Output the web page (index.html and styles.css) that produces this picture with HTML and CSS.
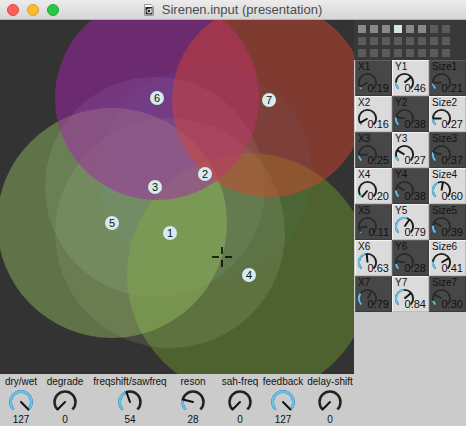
FILE: index.html
```html
<!DOCTYPE html>
<html>
<head>
<meta charset="utf-8">
<link rel="stylesheet" href="styles.css">
</head>
<body>
<div class="window">
  <div class="titlebar">
    <div class="lights"><span class="tl red"></span><span class="tl yellow"></span><span class="tl green"></span></div>
    <div class="title">
      <svg class="docicon" viewBox="0 0 10 12"><path d="M0.5 0.5 H7 L9.5 3 V11.5 H0.5 Z" fill="#fff" stroke="#999" stroke-width="1"/><rect x="1.5" y="3" width="7" height="7.5" fill="#222"/><circle cx="5" cy="7" r="2" fill="none" stroke="#fff" stroke-width="1"/><line x1="7" y1="4" x2="7" y2="9" stroke="#fff" stroke-width="1"/></svg>
      <span class="title-text">Sirenen.input (presentation)</span>
    </div>
    <div></div>
  </div>
  <div class="main">
    <div class="canvas">
      <svg width="354" height="354" viewBox="0 0 354 354">
        <circle cx="205" cy="154" r="107" fill="rgba(40,80,110,0.3)"/>
        <circle cx="155" cy="167" r="110" fill="rgba(150,200,215,0.18)"/>
        <circle cx="249" cy="255" r="122" fill="rgba(92,124,44,0.65)"/>
        <circle cx="170" cy="213" r="115" fill="rgba(220,225,200,0.12)"/>
        <circle cx="112" cy="203" r="115" fill="rgba(150,190,95,0.45)"/>
        <circle cx="157" cy="78" r="102" fill="rgba(165,35,172,0.5)"/>
        <circle cx="269" cy="80" r="97" fill="rgba(215,67,44,0.47)"/>
        <g class="tags">
          <circle cx="170" cy="213" r="7"/><text x="170" y="217">1</text>
          <circle cx="205" cy="154" r="7"/><text x="205" y="158">2</text>
          <circle cx="155" cy="167" r="7"/><text x="155" y="171">3</text>
          <circle cx="249" cy="255" r="7"/><text x="249" y="259">4</text>
          <circle cx="112" cy="203" r="7"/><text x="112" y="207">5</text>
          <circle cx="157" cy="78" r="7"/><text x="157" y="82">6</text>
          <circle cx="269" cy="80" r="7"/><text x="269" y="84">7</text>
        </g>
        <g class="cross">
          <line x1="212" y1="237" x2="219" y2="237"/><line x1="225" y1="237" x2="232" y2="237"/>
          <line x1="222" y1="227" x2="222" y2="234"/><line x1="222" y1="240" x2="222" y2="247"/>
        </g>
      </svg>
    </div>
    <div class="side">
      <div class="matrix">
        <span class="sq hi"></span><span class="sq hi"></span><span class="sq hi"></span><span class="sq sel"></span><span class="sq hi"></span><span class="sq hi"></span><span class="sq"></span><span class="sq"></span>
        <span class="sq"></span><span class="sq"></span><span class="sq"></span><span class="sq"></span><span class="sq"></span><span class="sq"></span><span class="sq"></span><span class="sq"></span>
        <span class="sq"></span><span class="sq"></span><span class="sq"></span><span class="sq"></span><span class="sq"></span><span class="sq"></span><span class="sq"></span><span class="sq"></span>
      </div>
      <div class="knobs">
        <div class="cell dk"><span class="lab">X1</span><svg class="dial" viewBox="0 0 24 24"><circle class="trk" cx="12" cy="12" r="9" pathLength="360" transform="rotate(135 12 12)"/><circle class="act" cx="12" cy="12" r="9" pathLength="360" transform="rotate(135 12 12)" stroke-dasharray="14 360"/><line class="ndl" x1="12" y1="12" x2="12" y2="3" transform="rotate(-121 12 12)"/></svg><span class="val">0.19</span></div>
        <div class="cell lt"><span class="lab">Y1</span><svg class="dial" viewBox="0 0 24 24"><circle class="trk" cx="12" cy="12" r="9" pathLength="360" transform="rotate(135 12 12)"/><circle class="act" cx="12" cy="12" r="9" pathLength="360" transform="rotate(135 12 12)" stroke-dasharray="45 360"/><line class="ndl" x1="12" y1="12" x2="12" y2="3" transform="rotate(50 12 12)"/></svg><span class="val">0.46</span></div>
        <div class="cell dk"><span class="lab">Size1</span><svg class="dial" viewBox="0 0 24 24"><circle class="trk" cx="12" cy="12" r="9" pathLength="360" transform="rotate(135 12 12)"/><circle class="act" cx="12" cy="12" r="9" pathLength="360" transform="rotate(135 12 12)" stroke-dasharray="40 360"/><line class="ndl" x1="12" y1="12" x2="12" y2="3" transform="rotate(-95 12 12)"/></svg><span class="val">0.21</span></div>

        <div class="cell lt"><span class="lab">X2</span><svg class="dial" viewBox="0 0 24 24"><circle class="trk" cx="12" cy="12" r="9" pathLength="360" transform="rotate(135 12 12)"/><circle class="act" cx="12" cy="12" r="9" pathLength="360" transform="rotate(135 12 12)" stroke-dasharray="15 360"/><line class="ndl" x1="12" y1="12" x2="12" y2="3" transform="rotate(-120 12 12)"/></svg><span class="val">0.16</span></div>
        <div class="cell dk"><span class="lab">Y2</span><svg class="dial" viewBox="0 0 24 24"><circle class="trk" cx="12" cy="12" r="9" pathLength="360" transform="rotate(135 12 12)"/><circle class="act" cx="12" cy="12" r="9" pathLength="360" transform="rotate(135 12 12)" stroke-dasharray="55 360"/><line class="ndl" x1="12" y1="12" x2="12" y2="3" transform="rotate(-80 12 12)"/></svg><span class="val">0.38</span></div>
        <div class="cell lt"><span class="lab">Size2</span><svg class="dial" viewBox="0 0 24 24"><circle class="trk" cx="12" cy="12" r="9" pathLength="360" transform="rotate(135 12 12)"/><circle class="act" cx="12" cy="12" r="9" pathLength="360" transform="rotate(135 12 12)" stroke-dasharray="45 360"/><line class="ndl" x1="12" y1="12" x2="12" y2="3" transform="rotate(-90 12 12)"/></svg><span class="val">0.27</span></div>

        <div class="cell dk"><span class="lab">X3</span><svg class="dial" viewBox="0 0 24 24"><circle class="trk" cx="12" cy="12" r="9" pathLength="360" transform="rotate(135 12 12)"/><circle class="act" cx="12" cy="12" r="9" pathLength="360" transform="rotate(135 12 12)" stroke-dasharray="40 360"/><line class="ndl" x1="12" y1="12" x2="12" y2="3" transform="rotate(-95 12 12)"/></svg><span class="val">0.25</span></div>
        <div class="cell lt"><span class="lab">Y3</span><svg class="dial" viewBox="0 0 24 24"><circle class="trk" cx="12" cy="12" r="9" pathLength="360" transform="rotate(135 12 12)"/><circle class="act" cx="12" cy="12" r="9" pathLength="360" transform="rotate(135 12 12)" stroke-dasharray="30 360"/><line class="ndl" x1="12" y1="12" x2="12" y2="3" transform="rotate(-60 12 12)"/></svg><span class="val">0.27</span></div>
        <div class="cell dk"><span class="lab">Size3</span><svg class="dial" viewBox="0 0 24 24"><circle class="trk" cx="12" cy="12" r="9" pathLength="360" transform="rotate(135 12 12)"/><circle class="act" cx="12" cy="12" r="9" pathLength="360" transform="rotate(135 12 12)" stroke-dasharray="60 360"/><line class="ndl" x1="12" y1="12" x2="12" y2="3" transform="rotate(-75 12 12)"/></svg><span class="val">0.37</span></div>

        <div class="cell lt"><span class="lab">X4</span><svg class="dial" viewBox="0 0 24 24"><circle class="trk" cx="12" cy="12" r="9" pathLength="360" transform="rotate(135 12 12)"/><circle class="act" cx="12" cy="12" r="9" pathLength="360" transform="rotate(135 12 12)" stroke-dasharray="15 360"/><line class="ndl" x1="12" y1="12" x2="12" y2="3" transform="rotate(-140 12 12)"/></svg><span class="val">0.20</span></div>
        <div class="cell dk"><span class="lab">Y4</span><svg class="dial" viewBox="0 0 24 24"><circle class="trk" cx="12" cy="12" r="9" pathLength="360" transform="rotate(135 12 12)"/><circle class="act" cx="12" cy="12" r="9" pathLength="360" transform="rotate(135 12 12)" stroke-dasharray="45 360"/><line class="ndl" x1="12" y1="12" x2="12" y2="3" transform="rotate(-60 12 12)"/></svg><span class="val">0.38</span></div>
        <div class="cell lt"><span class="lab">Size4</span><svg class="dial" viewBox="0 0 24 24"><circle class="trk" cx="12" cy="12" r="9" pathLength="360" transform="rotate(135 12 12)"/><circle class="act" cx="12" cy="12" r="9" pathLength="360" transform="rotate(135 12 12)" stroke-dasharray="110 360"/><line class="ndl" x1="12" y1="12" x2="12" y2="3" transform="rotate(10 12 12)"/></svg><span class="val">0.60</span></div>

        <div class="cell dk"><span class="lab">X5</span><svg class="dial" viewBox="0 0 24 24"><circle class="trk" cx="12" cy="12" r="9" pathLength="360" transform="rotate(135 12 12)"/><circle class="act" cx="12" cy="12" r="9" pathLength="360" transform="rotate(135 12 12)" stroke-dasharray="8 360"/><line class="ndl" x1="12" y1="12" x2="12" y2="3" transform="rotate(-100 12 12)"/></svg><span class="val">0.11</span></div>
        <div class="cell lt"><span class="lab">Y5</span><svg class="dial" viewBox="0 0 24 24"><circle class="trk" cx="12" cy="12" r="9" pathLength="360" transform="rotate(135 12 12)"/><circle class="act" cx="12" cy="12" r="9" pathLength="360" transform="rotate(135 12 12)" stroke-dasharray="150 360"/><line class="ndl" x1="12" y1="12" x2="12" y2="3" transform="rotate(35 12 12)"/></svg><span class="val">0.79</span></div>
        <div class="cell dk"><span class="lab">Size5</span><svg class="dial" viewBox="0 0 24 24"><circle class="trk" cx="12" cy="12" r="9" pathLength="360" transform="rotate(135 12 12)"/><circle class="act" cx="12" cy="12" r="9" pathLength="360" transform="rotate(135 12 12)" stroke-dasharray="50 360"/><line class="ndl" x1="12" y1="12" x2="12" y2="3" transform="rotate(-60 12 12)"/></svg><span class="val">0.39</span></div>

        <div class="cell lt"><span class="lab">X6</span><svg class="dial" viewBox="0 0 24 24"><circle class="trk" cx="12" cy="12" r="9" pathLength="360" transform="rotate(135 12 12)"/><circle class="act" cx="12" cy="12" r="9" pathLength="360" transform="rotate(135 12 12)" stroke-dasharray="120 360"/><line class="ndl" x1="12" y1="12" x2="12" y2="3" transform="rotate(-5 12 12)"/></svg><span class="val">0.63</span></div>
        <div class="cell dk"><span class="lab">Y6</span><svg class="dial" viewBox="0 0 24 24"><circle class="trk" cx="12" cy="12" r="9" pathLength="360" transform="rotate(135 12 12)"/><circle class="act" cx="12" cy="12" r="9" pathLength="360" transform="rotate(135 12 12)" stroke-dasharray="35 360"/><line class="ndl" x1="12" y1="12" x2="12" y2="3" transform="rotate(-80 12 12)"/></svg><span class="val">0.28</span></div>
        <div class="cell lt"><span class="lab">Size6</span><svg class="dial" viewBox="0 0 24 24"><circle class="trk" cx="12" cy="12" r="9" pathLength="360" transform="rotate(135 12 12)"/><circle class="act" cx="12" cy="12" r="9" pathLength="360" transform="rotate(135 12 12)" stroke-dasharray="50 360"/><line class="ndl" x1="12" y1="12" x2="12" y2="3" transform="rotate(60 12 12)"/></svg><span class="val">0.41</span></div>

        <div class="cell dk"><span class="lab">X7</span><svg class="dial" viewBox="0 0 24 24"><circle class="trk" cx="12" cy="12" r="9" pathLength="360" transform="rotate(135 12 12)"/><circle class="act" cx="12" cy="12" r="9" pathLength="360" transform="rotate(135 12 12)" stroke-dasharray="80 360"/><line class="ndl" x1="12" y1="12" x2="12" y2="3" transform="rotate(30 12 12)"/></svg><span class="val">0.79</span></div>
        <div class="cell lt"><span class="lab">Y7</span><svg class="dial" viewBox="0 0 24 24"><circle class="trk" cx="12" cy="12" r="9" pathLength="360" transform="rotate(135 12 12)"/><circle class="act" cx="12" cy="12" r="9" pathLength="360" transform="rotate(135 12 12)" stroke-dasharray="130 360"/><line class="ndl" x1="12" y1="12" x2="12" y2="3" transform="rotate(50 12 12)"/></svg><span class="val">0.84</span></div>
        <div class="cell dk"><span class="lab">Size7</span><svg class="dial" viewBox="0 0 24 24"><circle class="trk" cx="12" cy="12" r="9" pathLength="360" transform="rotate(135 12 12)"/><circle class="act" cx="12" cy="12" r="9" pathLength="360" transform="rotate(135 12 12)" stroke-dasharray="30 360"/><line class="ndl" x1="12" y1="12" x2="12" y2="3" transform="rotate(-60 12 12)"/></svg><span class="val">0.30</span></div>
      </div>
    </div>
  </div>
  <div class="bottom">
    <div class="ctl"><span class="clab">dry/wet</span><svg class="bdial" viewBox="0 0 26 26"><circle class="trk" cx="13" cy="13" r="10.5" pathLength="360" transform="rotate(135 13 13)"/><circle class="act" cx="13" cy="13" r="10.5" pathLength="360" transform="rotate(135 13 13)" stroke-dasharray="270 360"/><line class="ndl" x1="13" y1="13" x2="13" y2="2.5" transform="rotate(135 13 13)"/></svg><span class="cval">127</span></div>
    <div class="ctl"><span class="clab">degrade</span><svg class="bdial" viewBox="0 0 26 26"><circle class="trk" cx="13" cy="13" r="10.5" pathLength="360" transform="rotate(135 13 13)"/><line class="ndl" x1="13" y1="13" x2="13" y2="2.5" transform="rotate(-135 13 13)"/></svg><span class="cval">0</span></div>
    <div class="ctl"><span class="clab">freqshift/sawfreq</span><svg class="bdial" viewBox="0 0 26 26"><circle class="trk" cx="13" cy="13" r="10.5" pathLength="360" transform="rotate(135 13 13)"/><circle class="act" cx="13" cy="13" r="10.5" pathLength="360" transform="rotate(135 13 13)" stroke-dasharray="115 360"/><line class="ndl" x1="13" y1="13" x2="13" y2="2.5" transform="rotate(-20 13 13)"/></svg><span class="cval">54</span></div>
    <div class="ctl"><span class="clab">reson</span><svg class="bdial" viewBox="0 0 26 26"><circle class="trk" cx="13" cy="13" r="10.5" pathLength="360" transform="rotate(135 13 13)"/><circle class="act" cx="13" cy="13" r="10.5" pathLength="360" transform="rotate(135 13 13)" stroke-dasharray="60 360"/><line class="ndl" x1="13" y1="13" x2="13" y2="2.5" transform="rotate(-76 13 13)"/></svg><span class="cval">28</span></div>
    <div class="ctl"><span class="clab">sah-freq</span><svg class="bdial" viewBox="0 0 26 26"><circle class="trk" cx="13" cy="13" r="10.5" pathLength="360" transform="rotate(135 13 13)"/><line class="ndl" x1="13" y1="13" x2="13" y2="2.5" transform="rotate(-135 13 13)"/></svg><span class="cval">0</span></div>
    <div class="ctl"><span class="clab">feedback</span><svg class="bdial" viewBox="0 0 26 26"><circle class="trk" cx="13" cy="13" r="10.5" pathLength="360" transform="rotate(135 13 13)"/><circle class="act" cx="13" cy="13" r="10.5" pathLength="360" transform="rotate(135 13 13)" stroke-dasharray="270 360"/><line class="ndl" x1="13" y1="13" x2="13" y2="2.5" transform="rotate(135 13 13)"/></svg><span class="cval">127</span></div>
    <div class="ctl"><span class="clab">delay-shift</span><svg class="bdial" viewBox="0 0 26 26"><circle class="trk" cx="13" cy="13" r="10.5" pathLength="360" transform="rotate(135 13 13)"/><line class="ndl" x1="13" y1="13" x2="13" y2="2.5" transform="rotate(-135 13 13)"/></svg><span class="cval">0</span></div>
  </div>
</div>
</body>
</html>
```
FILE: styles.css
```css
* { box-sizing: border-box; }
html, body { margin: 0; padding: 0; }
body {
  width: 466px;
  height: 426px;
  overflow: hidden;
  background: #cbcbcb;
  font-family: "Liberation Sans", Arial, sans-serif;
  color: #111;
}
.window { width: 466px; height: 426px; display: flex; flex-direction: column; }

.titlebar {
  height: 20px;
  flex: none;
  display: grid;
  grid-template-columns: 1fr auto 1fr;
  align-items: center;
  background: linear-gradient(#ececec, #d6d6d6);
  border-bottom: 1px solid #b4b4b4;
}
.lights { display: flex; gap: 8px; padding-left: 7px; }
.tl { width: 12px; height: 12px; border-radius: 50%; display: block; }
.red { background: #fc5f57; border: 0.5px solid #de4a41; }
.yellow { background: #fdbc2e; border: 0.5px solid #dea123; }
.green { background: #28c840; border: 0.5px solid #1eab33; }
.title { display: flex; align-items: center; gap: 8px; }
.docicon { width: 10px; height: 12px; display: block; }
.title-text { font-size: 13px; color: #4b4b4b; }

.main { display: flex; height: 354px; flex: none; }
.canvas { width: 354px; height: 354px; background: #333333; overflow: hidden; }
.canvas svg { display: block; }
.tags circle { fill: #d5ecee; }
.tags text { font-family: "Liberation Sans", Arial, sans-serif; font-size: 11px; text-anchor: middle; fill: #111; }
.cross line { stroke: #000; stroke-width: 1.5; }

.side { width: 112px; display: flex; flex-direction: column; }
.matrix {
  height: 40px;
  background: #393939;
  padding: 5px 0 0 4px;
  display: grid;
  grid-template-columns: repeat(8, 8px);
  grid-auto-rows: 8px;
  column-gap: 4px;
  row-gap: 4px;
}
.sq { display: block; background: #5b5b5b; }
.sq.hi { background: #8a8a8a; }
.sq.sel { background: #cfe7e8; }

.knobs {
  margin-left: 1px;
  display: grid;
  grid-template-columns: repeat(3, 37px);
  grid-auto-rows: 36px;
}
.cell { position: relative; border: 1px solid; overflow: hidden; }
.cell.dk { background: #474747; border-color: #5e5e5e #3a3a3a #3a3a3a #5e5e5e; }
.cell.lt { background: #dbdbdb; border-color: #f4f4f4 #bcbcbc #bcbcbc #f4f4f4; }
.lab { position: absolute; left: 2px; top: 0px; font-size: 10px; line-height: 11px; }
.val { position: absolute; right: 2px; bottom: 1px; font-size: 11px; line-height: 12px; }
.dial { position: absolute; left: 0px; top: 10px; width: 23px; height: 23px; }
.dial .trk { fill: none; stroke: #1f1f1f; stroke-width: 2; stroke-dasharray: 270 360; }
.dk .dial .trk { stroke: #2a2a2a; }
.dial .act { fill: none; stroke: #5ec5f2; stroke-width: 2; }
.dial .ndl { stroke: #111; stroke-width: 2; }
.dk .dial .ndl { stroke: #2a2a2a; }

.bottom {
  height: 52px;
  flex: none;
  display: grid;
  grid-template-columns: 42px 46px 84px 42px 52px 34px 60px;
}
.ctl { display: flex; flex-direction: column; align-items: center; padding-top: 2px; }
.clab { font-size: 10px; line-height: 12px; white-space: nowrap; }
.bdial { width: 26px; height: 26px; display: block; margin-top: 1px; }
.bdial .trk { fill: none; stroke: #222; stroke-width: 2.5; stroke-dasharray: 270 360; }
.bdial .act { fill: none; stroke: #5ec5f2; stroke-width: 2.5; }
.bdial .ndl { stroke: #111; stroke-width: 2; stroke-linecap: round; }
.cval { font-size: 10px; line-height: 10px; margin-top: 0px; }
```
